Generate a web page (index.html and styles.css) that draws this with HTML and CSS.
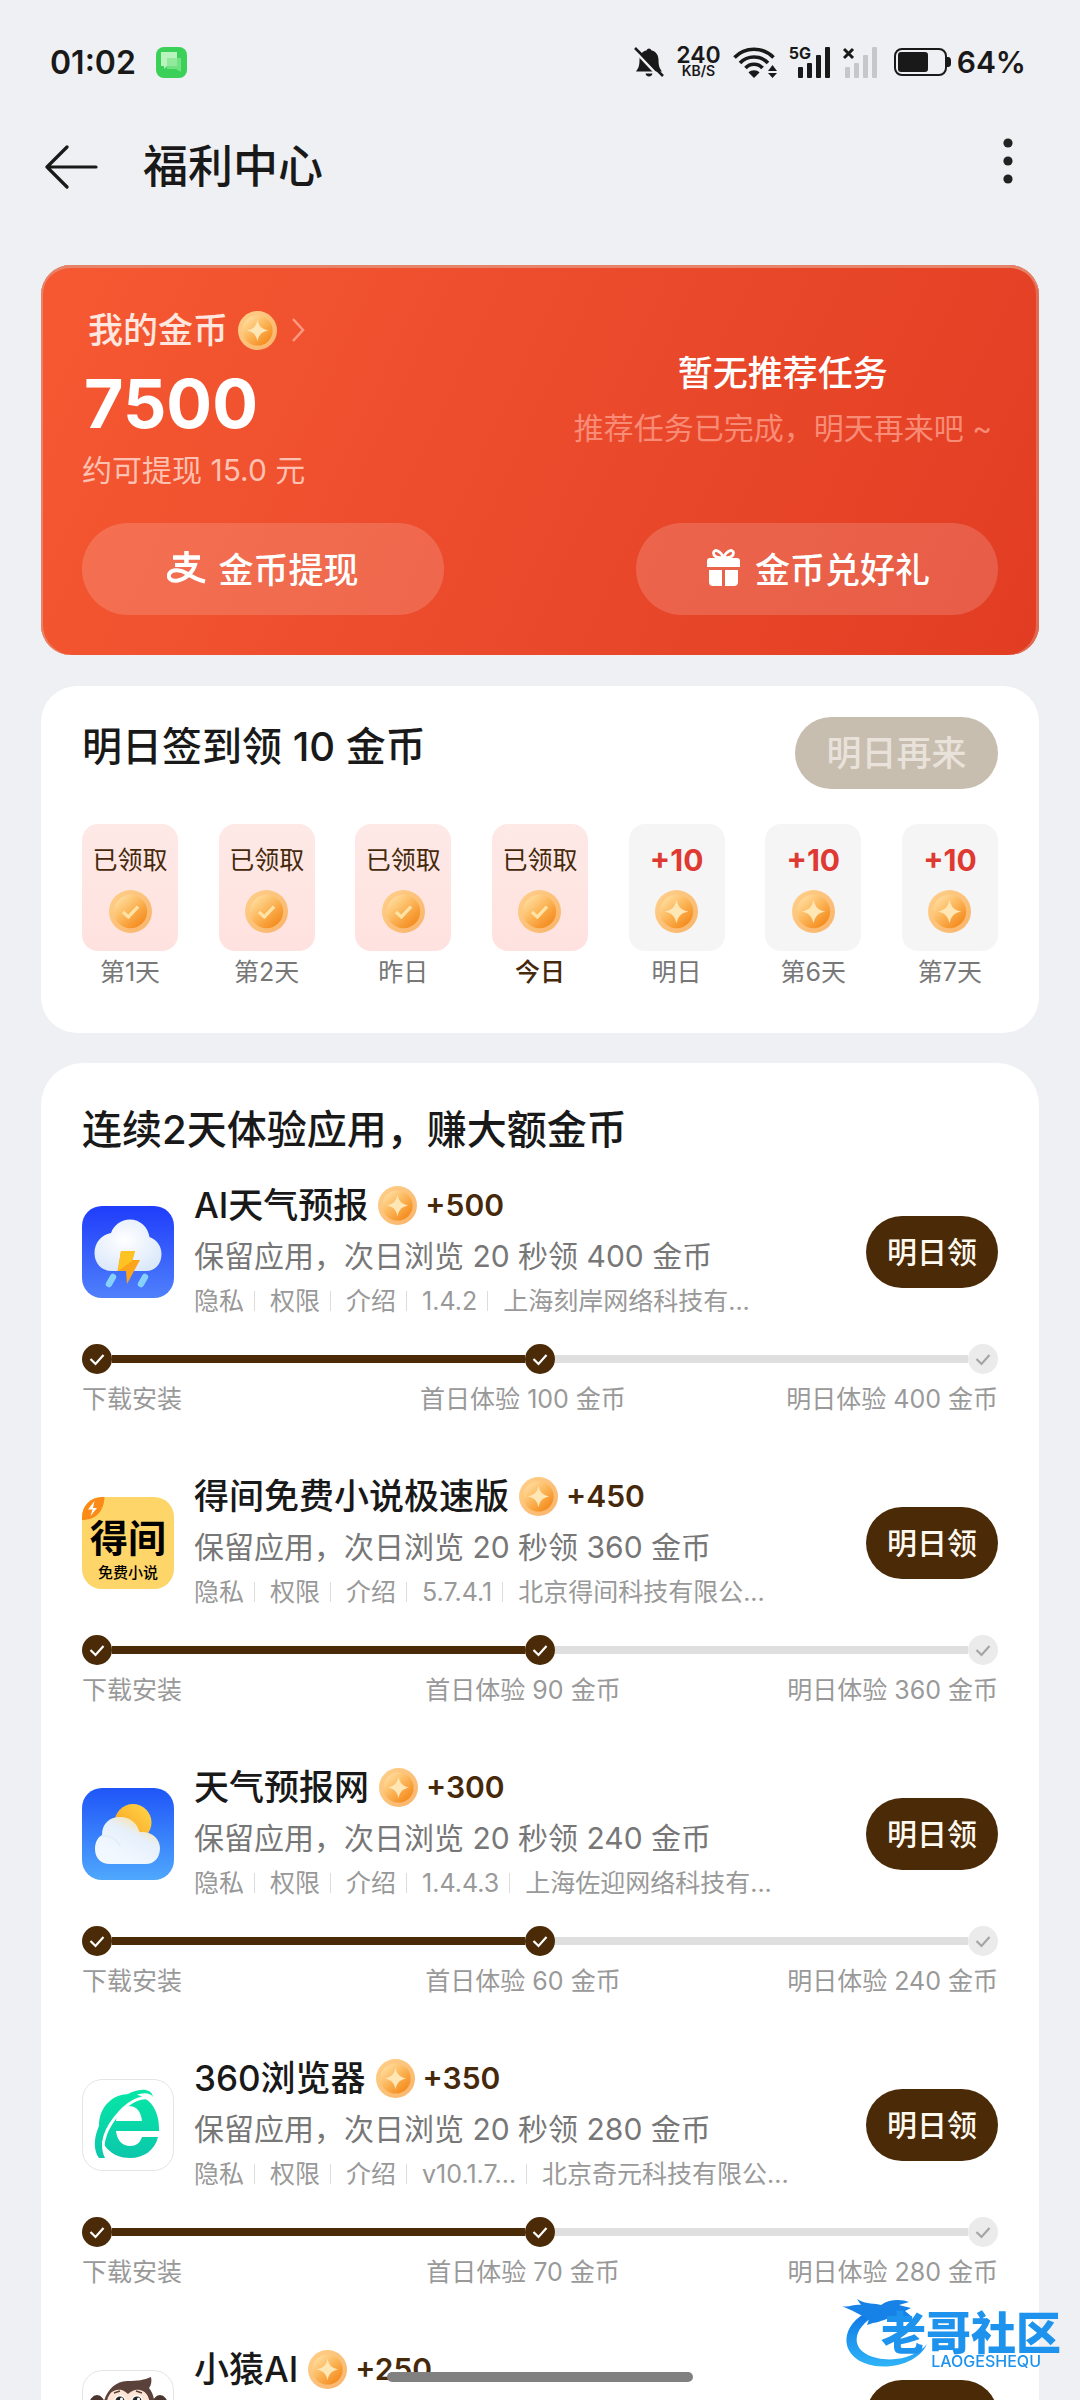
FILE: index.html
```html
<!DOCTYPE html>
<html lang="zh-CN">
<head>
<meta charset="utf-8">
<meta name="viewport" content="width=device-width, initial-scale=1">
<title>福利中心</title>
<link rel="stylesheet" href="styles.css">
</head>
<body>
<svg class="defs" aria-hidden="true">
  <defs>
    <linearGradient id="rim" x1="0" y1="0" x2="1" y2="1"><stop offset="0" stop-color="#ffd08a"/><stop offset="1" stop-color="#f9b36a"/></linearGradient>
    <linearGradient id="face" x1=".15" y1=".1" x2=".85" y2=".9"><stop offset="0" stop-color="#ffdc9c"/><stop offset=".5" stop-color="#fbb355"/><stop offset="1" stop-color="#f48a1c"/></linearGradient>
    <linearGradient id="storm" x1="0" y1="0" x2="0" y2="1"><stop offset="0" stop-color="#1f3dfb"/><stop offset="1" stop-color="#4f80fb"/></linearGradient>
    <linearGradient id="sky" x1="0" y1="0" x2="0" y2="1"><stop offset="0" stop-color="#1f55f8"/><stop offset="1" stop-color="#4fa8fd"/></linearGradient>
    <radialGradient id="cloud" cx=".45" cy=".4" r=".65"><stop offset="0" stop-color="#ffffff"/><stop offset="1" stop-color="#dbe8fa"/></radialGradient>
    <linearGradient id="sun" x1="1" y1="0" x2="0" y2="1"><stop offset="0" stop-color="#ffd84a"/><stop offset="1" stop-color="#fb9a1c"/></linearGradient>
    <linearGradient id="haze" x1=".8" y1=".1" x2=".3" y2=".8"><stop offset="0" stop-color="#fbe0a0"/><stop offset=".4" stop-color="#e6f0fb"/><stop offset="1" stop-color="#f2f8ff"/></linearGradient>
    <linearGradient id="mint" x1="0" y1="0" x2="0" y2="1"><stop offset="0" stop-color="#06e6a6"/><stop offset="1" stop-color="#0cc7ab"/></linearGradient>
    <linearGradient id="wave" x1="0" y1="0" x2="0" y2="1"><stop offset="0" stop-color="#0f79e6"/><stop offset="1" stop-color="#2fb4f8"/></linearGradient>
    <symbol id="coin" viewBox="0 0 40 40">
      <circle cx="20" cy="20" r="20" fill="url(#rim)"/><circle cx="20" cy="20" r="15.5" fill="url(#face)"/>
      <path d="M20 9C21.5 15.5 24 18.500 31 20C24 21.500 21.500 24.500 20 31C18.500 24.500 16 21.500 9 20C16 18.500 18.500 15.500 20 9Z" fill="#ffe6b5"/>
    </symbol>
    <symbol id="coin-done" viewBox="0 0 40 40">
      <circle cx="20" cy="20" r="20" fill="url(#rim)"/><circle cx="20" cy="20" r="15.500" fill="url(#face)"/>
      <path d="M13 20.500L18 25L27 15.500" fill="none" stroke="#ffe3a4" stroke-width="3"/>
    </symbol>
    <symbol id="node" viewBox="0 0 30 30">
      <circle cx="15" cy="15" r="15" fill="#4b2b07"/><path d="M8.500 15L13.500 20L21.500 11" fill="none" stroke="#fff" stroke-width="2.200"/>
    </symbol>
    <symbol id="node-off" viewBox="0 0 30 30">
      <circle cx="15" cy="15" r="15" fill="#ebebeb"/><path d="M8.500 15L13.500 20L21.500 11" fill="none" stroke="#a5a5a5" stroke-width="2.200"/>
    </symbol>
  </defs>
</svg>

<div class="app">
  <div class="status">
    <span class="clock">01:02</span>
    <svg class="msg" viewBox="0 0 31 31" width="31" height="31"><rect width="31" height="31" rx="8" fill="#3bd158"/><path d="M5 5H21V19H11L8 22V19H5Z" fill="#b9f3bd"/><path d="M11 11H25V25L20 22H11Z" fill="#86e592" opacity=".75"/></svg>
    <div class="signals">
      <svg viewBox="0 0 30 30" width="30" height="30"><path d="M15 1.500C16 1.500 17 2.200 17.200 3.300C22 4.500 24.500 8 24.500 13C24.500 19 25.500 21 28 24.500H2C4.500 21 5.500 19 5.500 13C5.500 8 8 4.500 12.800 3.300C13 2.200 14 1.500 15 1.500ZM11.500 26.500H18.500C18 28.500 17 29.500 15 29.500S12 28.500 11.500 26.500Z" fill="#191919"/><path d="M-1 2L27 32" stroke="#eff0f3" stroke-width="2.500"/><path d="M1 1L29 29" stroke="#191919" stroke-width="2.500"/></svg>
      <span class="speed"><b>240</b><small>KB/S</small></span>
      <svg viewBox="0 0 44 31" width="44" height="31"><g fill="none" stroke="#191919" stroke-width="3.600"><path d="M1.500 10.500C12-.5 30-.5 40.500 10.500"/><path d="M7 16C14.500 8 27.500 8 35 16"/><path d="M12.500 21C17 16 25 16 29.500 21"/></g><path d="M21 31L15.500 25.500C18 22.500 24 22.500 26.500 25.500Z" fill="#191919"/><path d="M35 24H44L39.500 18ZM35 26H44L39.500 31Z" fill="#191919"/></svg>
      <span class="net"><span class="gen">5G</span><svg viewBox="0 0 42 31" width="42" height="31" fill="#191919"><rect x="9" y="20" width="5" height="11" rx="1"/><rect x="18" y="16" width="5" height="15" rx="1"/><rect x="27" y="8" width="5" height="23" rx="1"/><rect x="36" y="0" width="5" height="31" rx="1"/></svg></span>
      <svg viewBox="0 0 34 31" width="34" height="31"><g fill="#c6c7c9"><rect x="2" y="20" width="5" height="11" rx="1"/><rect x="11" y="16" width="5" height="15" rx="1"/><rect x="20" y="8" width="5" height="23" rx="1"/><rect x="29" y="0" width="5" height="31" rx="1"/></g><path d="M1 2L10 11M10 2L1 11" stroke="#191919" stroke-width="3"/></svg>
      <span class="battery"><svg viewBox="0 0 57 28" width="57" height="28"><rect x="1" y="1" width="51" height="26" rx="7" fill="none" stroke="#191919" stroke-width="2"/><rect x="4" y="4" width="30" height="20" rx="3" fill="#191919"/><path d="M53 9C57 9 57 11 57 14S57 19 53 19Z" fill="#191919"/></svg>64%</span>
    </div>
  </div>

  <header class="bar">
    <button class="icon-btn" aria-label="返回"><svg viewBox="0 0 53 46" width="53" height="46" fill="none" stroke="#191919" stroke-width="3.200" stroke-linecap="round" stroke-linejoin="round"><path d="M51 23H2M22 3L2 23L22 43"/></svg></button>
    <h1>福利中心</h1>
    <button class="icon-btn" aria-label="更多"><svg viewBox="0 0 10 58" width="10" height="58" fill="#222"><circle cx="5" cy="5" r="4.600"/><circle cx="5" cy="23" r="4.600"/><circle cx="5" cy="41" r="4.600"/></svg></button>
  </header>

  <main>
    <section class="wallet">
      <div class="wallet-top">
        <div>
          <a class="mine" href="#coins">我的金币<svg class="coin"><use href="#coin"/></svg><svg class="chev" viewBox="0 0 15 26" width="15" height="26"><path d="M2 2L12 13L2 24" fill="none" stroke="#ff9a80" stroke-width="2.500"/></svg></a>
          <div class="total">7500</div>
          <div class="worth">约可提现 15.0 元</div>
        </div>
        <div class="none">
          <strong>暂无推荐任务</strong>
          <span>推荐任务已完成，明天再来吧 ~</span>
        </div>
      </div>
      <div class="wallet-actions">
        <button class="glass"><svg viewBox="0 0 39 39" width="39" height="39" fill="none" stroke="#fff"><path d="M6 9.500H33M19.500 3V16" stroke-width="4.500"/><path d="M8 17H28C26 24 19 31 11 32.500C3 34 .5 29 2.500 25.500C5.500 20.500 14 22 20 25.500C26 29.500 31 32 38 33.500" stroke-width="4"/></svg>金币提现</button>
        <button class="glass"><svg viewBox="0 0 39 39" width="39" height="39" fill="#fff"><path d="M3 13Q3 10 6 10H33Q36 10 36 13V19H3ZM5 22H18V38H9Q5 38 5 34ZM21 22H34V34Q34 38 30 38H21Z"/><path d="M19.500 10C17 3 10 0 9.500 5C9.500 9 14 10 19.500 10C25 10 29.500 9 29.500 5C29 0 22 3 19.500 10Z" fill="none" stroke="#fff" stroke-width="2.800"/></svg>金币兑好礼</button>
      </div>
    </section>

    <section class="card sign">
      <div class="sign-head"><h2>明日签到领 10 金币</h2><button class="later" disabled>明日再来</button></div>
      <ol class="days">
        <li><div class="day done">已领取<svg><use href="#coin-done"/></svg></div>第1天</li>
        <li><div class="day done">已领取<svg><use href="#coin-done"/></svg></div>第2天</li>
        <li><div class="day done">已领取<svg><use href="#coin-done"/></svg></div>昨日</li>
        <li class="today"><div class="day done">已领取<svg><use href="#coin-done"/></svg></div>今日</li>
        <li><div class="day">+10<svg><use href="#coin"/></svg></div>明日</li>
        <li><div class="day">+10<svg><use href="#coin"/></svg></div>第6天</li>
        <li><div class="day">+10<svg><use href="#coin"/></svg></div>第7天</li>
      </ol>
    </section>

    <section class="card tasks">
      <h2>连续2天体验应用，赚大额金币</h2>

      <article class="task">
        <div class="task-main">
          <svg class="logo" viewBox="0 0 92 92"><rect width="92" height="92" rx="20" fill="url(#storm)"/><path d="M30 65C19 65 12.500 57 12.500 47C12.500 37 19 29 29 27C32 19 39 13.500 48 13.500C58 13.500 66 21 67.500 31C75 34 79.500 40 79.500 48C79.500 58 73 65 64 65Z" fill="url(#cloud)"/><path d="M39 45H53L50.500 54H58L45 78L44 65H35.500Z" fill="#fca41c"/><path d="M39 45H53L50 55L36 65Z" fill="#fdc322"/><path d="M31 71L27 78M63 71L59 78" stroke="#86d2fc" stroke-width="6.500" stroke-linecap="round"/></svg>
          <div class="info">
            <h3>AI天气预报<svg class="coin"><use href="#coin"/></svg><b>+500</b></h3>
            <p>保留应用，次日浏览 20 秒领 400 金币</p>
            <div class="meta"><a href="#p1">隐私</a><a href="#q1">权限</a><a href="#i1">介绍</a><span>1.4.2</span><span>上海刻岸网络科技有...</span></div>
          </div>
          <button class="claim">明日领</button>
        </div>
        <div class="track"><svg><use href="#node"/></svg><i class="on"></i><svg><use href="#node"/></svg><i></i><svg><use href="#node-off"/></svg></div>
        <div class="steps"><span>下载安装</span><span>首日体验 100 金币</span><span>明日体验 400 金币</span></div>
      </article>

      <article class="task">
        <div class="task-main">
          <svg class="logo" viewBox="0 0 92 92"><rect width="92" height="92" rx="20" fill="#fdd568"/><path d="M0 23V20A20 20 0 0 1 20 0H22.500C22 14 14 23 0 23Z" fill="#fb8a17"/><path d="M12.500 4L6 12.500H10.500L8.500 19L15 11H11Z" fill="#fff"/><text class="logo-big" x="46" y="55" text-anchor="middle">得间</text><text class="logo-small" x="46" y="81" text-anchor="middle">免费小说</text></svg>
          <div class="info">
            <h3>得间免费小说极速版<svg class="coin"><use href="#coin"/></svg><b>+450</b></h3>
            <p>保留应用，次日浏览 20 秒领 360 金币</p>
            <div class="meta"><a href="#p2">隐私</a><a href="#q2">权限</a><a href="#i2">介绍</a><span>5.7.4.1</span><span>北京得间科技有限公...</span></div>
          </div>
          <button class="claim">明日领</button>
        </div>
        <div class="track"><svg><use href="#node"/></svg><i class="on"></i><svg><use href="#node"/></svg><i></i><svg><use href="#node-off"/></svg></div>
        <div class="steps"><span>下载安装</span><span>首日体验 90 金币</span><span>明日体验 360 金币</span></div>
      </article>

      <article class="task">
        <div class="task-main">
          <svg class="logo" viewBox="0 0 92 92"><rect width="92" height="92" rx="20" fill="url(#sky)"/><circle cx="51" cy="34.500" r="18.500" fill="url(#sun)"/><path d="M28 76C19 76 13 70 13 61C13 54 16 49 20 47C20 36 27 29 38 29C48 29 55 35 57.500 44C70 43 78 51 78 60C78 70 72 76 64 76Z" fill="url(#haze)"/><path d="M20 48C28 47 35 51 38 58" fill="none" stroke="#e3eefa" stroke-width="2"/></svg>
          <div class="info">
            <h3>天气预报网<svg class="coin"><use href="#coin"/></svg><b>+300</b></h3>
            <p>保留应用，次日浏览 20 秒领 240 金币</p>
            <div class="meta"><a href="#p3">隐私</a><a href="#q3">权限</a><a href="#i3">介绍</a><span>1.4.4.3</span><span>上海佐迎网络科技有...</span></div>
          </div>
          <button class="claim">明日领</button>
        </div>
        <div class="track"><svg><use href="#node"/></svg><i class="on"></i><svg><use href="#node"/></svg><i></i><svg><use href="#node-off"/></svg></div>
        <div class="steps"><span>下载安装</span><span>首日体验 60 金币</span><span>明日体验 240 金币</span></div>
      </article>

      <article class="task">
        <div class="task-main">
          <svg class="logo" viewBox="0 0 92 92"><rect x=".5" y=".5" width="91" height="91" rx="20" fill="#fff" stroke="#e4e4e4"/><path d="M77 52H34C35 62 41 67 48 67C54 67 58 64 60 58H76C73 71 62 79 48 79C30 79 17 66 17 47C17 28 30 15 48 15C66 15 78 30 77 52ZM34 42H60C59 32 54 27 47 27C40 27 35 33 34 42Z" fill="url(#mint)" fill-rule="evenodd"/><path d="M70 21C62 15 48 22 38 33C25 47 18 62 22 79" fill="none" stroke="#fff" stroke-width="3"/><path d="M71 18C69 7 52 9 37 21C16 38 7 65 17 79H23C15 62 24 40 42 24C55 13 67 12 71 18Z" fill="url(#mint)"/></svg>
          <div class="info">
            <h3>360浏览器<svg class="coin"><use href="#coin"/></svg><b>+350</b></h3>
            <p>保留应用，次日浏览 20 秒领 280 金币</p>
            <div class="meta"><a href="#p4">隐私</a><a href="#q4">权限</a><a href="#i4">介绍</a><span>v10.1.7...</span><span>北京奇元科技有限公...</span></div>
          </div>
          <button class="claim">明日领</button>
        </div>
        <div class="track"><svg><use href="#node"/></svg><i class="on"></i><svg><use href="#node"/></svg><i></i><svg><use href="#node-off"/></svg></div>
        <div class="steps"><span>下载安装</span><span>首日体验 70 金币</span><span>明日体验 280 金币</span></div>
      </article>

      <article class="task">
        <div class="task-main">
          <svg class="logo" viewBox="0 0 92 92"><rect x=".5" y=".5" width="91" height="91" rx="20" fill="#fff" stroke="#e4e4e4"/><ellipse cx="15" cy="36" rx="8" ry="11" fill="#4a352f"/><ellipse cx="78" cy="36" rx="8" ry="11" fill="#4a352f"/><path d="M20 60C17 30 27 12 45 11C56 11 62 10 69 7C70 12 69 15 67 18C74 26 74 42 72 60Z" fill="#5a423a"/><path d="M24 60C22 34 25 21 35 20C41 19 43 22 46 24C49 22 52 19 58 20C68 22 70 34 68 60Z" fill="#fde4d5"/><circle cx="38" cy="31" r="6" fill="#fff"/><circle cx="55" cy="31" r="6" fill="#fff"/><circle cx="38" cy="31" r="4.500" fill="#222"/><circle cx="55" cy="31" r="4.500" fill="#222"/><circle cx="39.500" cy="29" r="1.500" fill="#fff"/><circle cx="56.500" cy="29" r="1.500" fill="#fff"/><path d="M32 23L38 21M54 21L60 23" stroke="#5a423a" stroke-width="1.500"/></svg>
          <div class="info"><h3>小猿AI<svg class="coin"><use href="#coin"/></svg><b>+250</b></h3></div>
          <button class="claim">明日领</button>
        </div>
      </article>
    </section>
  </main>

  <div class="watermark" aria-hidden="true">
    <svg viewBox="0 0 92 76" width="92" height="76"><path d="M25 18C0 32 0 64 36 70C62 73 82 62 88 48C80 58 60 67 38 62C12 56 12 36 32 22Z" fill="url(#wave)"/><path d="M0 9C8 13 14 8 22 9L18 3C28 9 36 7 42 9C52 2 64 4 70 6L60 9L72 12L66 15L72 20L58 22C50 20 44 26 34 27L28 29L30 23C22 20 14 14 0 9Z" fill="#1682e8"/></svg>
    <div class="wm-text"><b>老哥社区</b><small>LAOGESHEQU</small></div>
  </div>
  <div class="home"></div>
</div>
</body>
</html>
```
FILE: styles.css
```css
* { box-sizing: border-box; margin: 0; padding: 0; }
body {
  background: #eff0f3;
  color: #191919;
  font-family: Inter, "Noto Sans CJK SC", sans-serif;
}
button { border: 0; background: none; font: inherit; color: inherit; }
a { color: inherit; text-decoration: none; }
svg { display: block; flex: none; }
h1, h2, h3 { font-weight: 500; }
.defs { position: absolute; width: 0; height: 0; }

.app {
  height: 100vh;
  display: flex;
  flex-direction: column;
  overflow: hidden;
}

/* status bar */
.status {
  flex: none;
  height: 124px;
  padding: 0 54px 0 50px;
  display: flex;
  align-items: center;
}
.clock { font-size: 32px; font-weight: 600; margin-right: 20px; }
.signals { margin-left: auto; display: flex; align-items: center; gap: 12px; }
.speed { display: flex; flex-direction: column; align-items: center; }
.speed b { font-size: 23px; line-height: 18px; font-weight: 600; }
.speed small { font-size: 14px; line-height: 14px; font-weight: 600; }
.net { position: relative; }
.gen { position: absolute; left: 0; top: 0; font-size: 16px; line-height: 13px; font-weight: 700; }
.battery { display: flex; align-items: center; gap: 6px; font-size: 30px; font-weight: 600; margin-left: 5px; }

/* title bar */
.bar {
  flex: none;
  height: 86px;
  padding: 0 67px 0 45px;
  display: flex;
  align-items: center;
}
.bar h1 { flex: 1; margin-left: 45px; font-size: 45px; line-height: 60px; }

main {
  flex: 1;
  min-height: 0;
  overflow: hidden;
  padding: 55px 41px 0;
}

/* wallet */
.wallet {
  padding: 40px 41px;
  margin-bottom: 31px;
  border-radius: 30px;
  background: linear-gradient(115deg, #f65932, #ea492b 55%, #e23d23);
  box-shadow: inset 0 3px #e6846a, inset 2px 0 #e6846a, inset -3px 0 #e06a52;
  color: #fff;
}
.wallet-top { display: flex; align-items: center; justify-content: space-between; }
.mine {
  display: flex;
  align-items: center;
  padding-left: 6px;
  font-size: 35px;
  line-height: 50px;
  font-weight: 500;
  color: #ffe6df;
}
.coin { width: 39px; height: 39px; margin-left: 10px; }
.chev { margin-left: 14px; }
.total { margin: 13px 0 12px; padding-left: 2px; font-size: 68px; line-height: 70px; font-weight: 700; }
.worth { font-size: 30px; line-height: 40px; color: #ffc1b1; }
.none { display: flex; flex-direction: column; gap: 10px; align-items: center; padding-right: 6px; }
.none strong { font-size: 35px; line-height: 50px; font-weight: 500; }
.none span { font-size: 30px; line-height: 40px; color: #f98c76; }
.wallet-actions { display: flex; justify-content: space-between; margin-top: 33px; }
.glass {
  width: 362px;
  height: 92px;
  padding-bottom: 4px;
  border-radius: 46px;
  background: rgba(255, 255, 255, .16);
  display: flex;
  align-items: center;
  justify-content: center;
  gap: 12px;
  font-size: 35px;
  font-weight: 500;
}

.card { background: #fff; padding: 0 41px; }
.card h2 { font-size: 40px; line-height: 60px; }

/* daily sign-in */
.sign { border-radius: 36px; padding-top: 31px; padding-bottom: 40px; margin-bottom: 30px; }
.sign-head { display: flex; justify-content: space-between; align-items: flex-start; }
.later {
  width: 203px;
  height: 72px;
  padding-bottom: 6px;
  border-radius: 36px;
  background: #c8beb0;
  color: #e8e2da;
  font-size: 35px;
  font-weight: 500;
}
.days { list-style: none; display: flex; justify-content: space-between; margin-top: 35px; }
.days li { font-size: 25px; line-height: 42px; text-align: center; color: #777; }
.days .today { color: #46290b; font-weight: 500; }
.day {
  width: 96px;
  height: 127px;
  padding-top: 15px;
  border-radius: 16px;
  background: #f5f5f5;
  color: #de3a32;
  font-size: 30px;
  font-weight: 700;
  display: flex;
  flex-direction: column;
  align-items: center;
  gap: 9px;
}
.day.done { background: linear-gradient(#fde9e6, #ffe2df); color: #46290b; font-size: 25px; font-weight: 400; }
.day svg { width: 43px; height: 43px; }

/* app tasks */
.tasks { border-radius: 42px 42px 0 0; padding-top: 37px; }
.task { margin-top: 22px; }
.task + .task { margin-top: 56px; }
.task-main { display: flex; align-items: center; }
.logo { width: 92px; height: 92px; }
.logo-big { font-size: 38px; font-weight: 700; }
.logo-small { font-size: 15px; font-weight: 500; }
.info { flex: 1; min-width: 0; min-height: 140px; margin-left: 20px; }
.info h3 { display: flex; align-items: center; height: 46px; font-size: 35px; line-height: 46px; }
.info h3 b { margin-left: 8px; font-size: 30px; font-weight: 600; color: #46290b; }
.info p { margin-top: 4px; font-size: 30px; line-height: 48px; color: #777; }
.meta { display: flex; align-items: center; height: 42px; font-size: 25px; color: #999; }
.meta > * { line-height: 20px; white-space: nowrap; }
.meta > * + * { margin-left: 10px; padding-left: 15px; border-left: 1px solid #ddd; }
.claim {
  width: 132px;
  height: 72px;
  padding-bottom: 4px;
  border-radius: 36px;
  background: #4b2b07;
  color: #fffaf0;
  font-size: 30px;
  font-weight: 500;
}
.track { display: flex; align-items: center; margin-top: 22px; }
.track svg { width: 30px; height: 30px; }
.track i { flex: 1; height: 8px; background: #dfdfdf; }
.track .on { background: #4b2b07; }
.steps {
  display: grid;
  grid-template-columns: repeat(3, minmax(0, 1fr));
  margin-top: 7px;
  font-size: 25px;
  line-height: 36px;
  color: #999;
}
.steps span { white-space: nowrap; }
.steps :nth-child(2) { text-align: center; padding-right: 34px; }
.steps :last-child { text-align: right; }

/* overlays */
.watermark { position: fixed; right: 19px; bottom: 28px; display: flex; align-items: flex-start; }
.watermark svg { margin-right: -50px; }
.wm-text { display: flex; flex-direction: column; align-items: flex-end; color: #1d93ee; padding-top: 18px; }
.wm-text b { font-size: 45px; line-height: 40px; font-weight: 900; }
.wm-text small { font-size: 16px; line-height: 14px; font-weight: 500; margin-right: 20px; }
.home {
  position: fixed;
  left: 50%;
  bottom: 18px;
  width: 306px;
  height: 10px;
  margin-left: -153px;
  border-radius: 5px;
  background: #808080;
}
```
